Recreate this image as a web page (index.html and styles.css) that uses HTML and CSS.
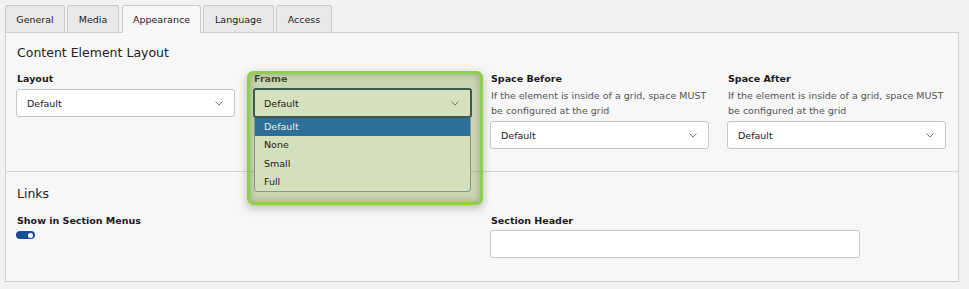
FILE: index.html
```html
<!DOCTYPE html>
<html>
<head>
<meta charset="utf-8">
<link rel="stylesheet" href="styles.css">
</head>
<body>
<div class="wrap">
  <div class="tabs">
    <div class="tab t-general">General</div>
    <div class="tab t-media">Media</div>
    <div class="tab t-appearance active">Appearance</div>
    <div class="tab t-language">Language</div>
    <div class="tab t-access">Access</div>
  </div>
  <div class="panel">
    <section class="section first">
      <h2 class="heading">Content Element Layout</h2>
      <div class="grid">
        <div class="field">
          <div class="label">Layout</div>
          <div class="select"><span>Default</span><svg class="chev" width="8" height="5" viewBox="0 0 8 5"><path d="M0.5 0.5 L4 4 L7.5 0.5" fill="none" stroke="#666" stroke-width="0.9"/></svg></div>
        </div>
        <div class="field frame">
          <div class="label">Frame</div>
          <div class="select focused"><span>Default</span><svg class="chev" width="8" height="5" viewBox="0 0 8 5"><path d="M0.5 0.5 L4 4 L7.5 0.5" fill="none" stroke="#66705a" stroke-width="0.9"/></svg></div>
          <ul class="dropdown">
            <li class="opt selected">Default</li>
            <li class="opt">None</li>
            <li class="opt">Small</li>
            <li class="opt">Full</li>
          </ul>
          <div class="highlight"></div>
        </div>
        <div class="field">
          <div class="label">Space Before</div>
          <div class="help">If the element is inside of a grid, space MUST be configured at the grid</div>
          <div class="select"><span>Default</span><svg class="chev" width="8" height="5" viewBox="0 0 8 5"><path d="M0.5 0.5 L4 4 L7.5 0.5" fill="none" stroke="#666" stroke-width="0.9"/></svg></div>
        </div>
        <div class="field">
          <div class="label">Space After</div>
          <div class="help">If the element is inside of a grid, space MUST be configured at the grid</div>
          <div class="select"><span>Default</span><svg class="chev" width="8" height="5" viewBox="0 0 8 5"><path d="M0.5 0.5 L4 4 L7.5 0.5" fill="none" stroke="#666" stroke-width="0.9"/></svg></div>
        </div>
      </div>
    </section>
    <section class="section second">
      <h2 class="heading">Links</h2>
      <div class="grid">
        <div class="field">
          <div class="label">Show in Section Menus</div>
          <div class="toggle"><span class="knob"></span></div>
        </div>
        <div class="field"></div>
        <div class="field wide">
          <div class="label">Section Header</div>
          <div class="input"></div>
        </div>
      </div>
    </section>
  </div>
</div>
</body>
</html>
```
FILE: styles.css
```css
* { box-sizing: border-box; }
html, body { margin: 0; padding: 0; }
body {
  background: #f2f2f2;
  font-family: "DejaVu Sans", Verdana, sans-serif;
  font-size: 10px;
  color: #1a1a1a;
  width: 969px;
  height: 289px;
  overflow: hidden;
}
.wrap { padding: 5px 10px 0 5px; }
.tabs { display: flex; gap: 2px; height: 27px; position: relative; z-index: 1; }
.tab {
  border: 1px solid #c9c9c9;
  border-bottom: none;
  border-radius: 3px 3px 0 0;
  background: #e9e9e9;
  display: flex;
  align-items: center;
  justify-content: center;
  font-size: 9.5px;
  color: #222;
}
.t-general { width: 60px; }
.t-media { width: 52px; }
.t-appearance { width: 79px; margin-left: 1px; }
.t-language { width: 71px; }
.t-access { width: 56px; }
.tab.active { background: #f7f7f7; height: 28px; }
.panel {
  border: 1px solid #cfcfcf;
  background: #f7f7f7;
  height: 250px;
}
.section { padding: 0 10px; }
.section.first { padding-top: 11px; height: 139px; border-bottom: 1px solid #d6d6d6; }
.section.second { padding-top: 13px; }
.heading { margin: 0 0 0 1px; font-size: 12.5px; font-weight: normal; line-height: 18px; color: #222; }
.section.first .heading { margin-bottom: 11px; }
.section.second .heading { margin-bottom: 12px; }
.grid { display: grid; grid-template-columns: repeat(4, 219px); column-gap: 18px; }
.field { position: relative; }
.field.wide { grid-column: 3 / span 2; }
.label { font-weight: bold; font-size: 9.5px; line-height: 12px; margin: 0 0 4px 1px; color: #1a1a1a; }
.help { color: #555; font-size: 9.5px; line-height: 15px; margin: -1px 0 3px 1px; }
.select {
  height: 28px;
  background: #fff;
  border: 1px solid #c6c6c6;
  border-radius: 3px;
  display: flex;
  align-items: center;
  justify-content: space-between;
  padding: 0 11px 0 10px;
  font-size: 9.5px;
}
.select.focused {
  border: 2px solid #3c5852;
  padding-left: 9px;
  height: 30px;
  margin-top: -1px;
  background: #d6e1c0;
  color: #1c2414;
  position: relative;
  z-index: 4;
}
.dropdown {
  position: absolute;
  left: 1px; right: 1px;
  top: 45px;
  margin: 0; padding: 0;
  list-style: none;
  background: #d4dfbd;
  border: 1px solid #8a9682;
  border-top: none;
  border-radius: 0 0 4px 4px;
  color: #1c2414;
  z-index: 4;
}
.opt { height: 18.3px; line-height: 18px; padding-left: 9px; font-size: 9.5px; }
.opt.selected { background: #2d6f98; color: #e8f0e4; }
.highlight {
  position: absolute;
  left: -6px; top: -2px;
  width: 236px; height: 134px;
  border: 3px solid #8fcf4f;
  border-radius: 6px;
  background: rgba(128, 158, 68, 0.38);
  box-shadow: 0 3px 8px rgba(60, 70, 40, 0.35), inset 0 0 7px rgba(60, 80, 30, 0.35);
  z-index: 3;
}
.toggle {
  width: 19px; height: 8px;
  border-radius: 4px;
  background: #1b4d97;
  position: relative;
  margin-top: 3px;
}
.knob {
  position: absolute;
  right: 2px; top: 1.5px;
  width: 5px; height: 5px;
  border-radius: 50%;
  background: #fff;
}
.input {
  width: 370px;
  height: 28px;
  background: #fff;
  border: 1px solid #c6c6c6;
  border-radius: 3px;
  margin-top: -1px;
}
```
